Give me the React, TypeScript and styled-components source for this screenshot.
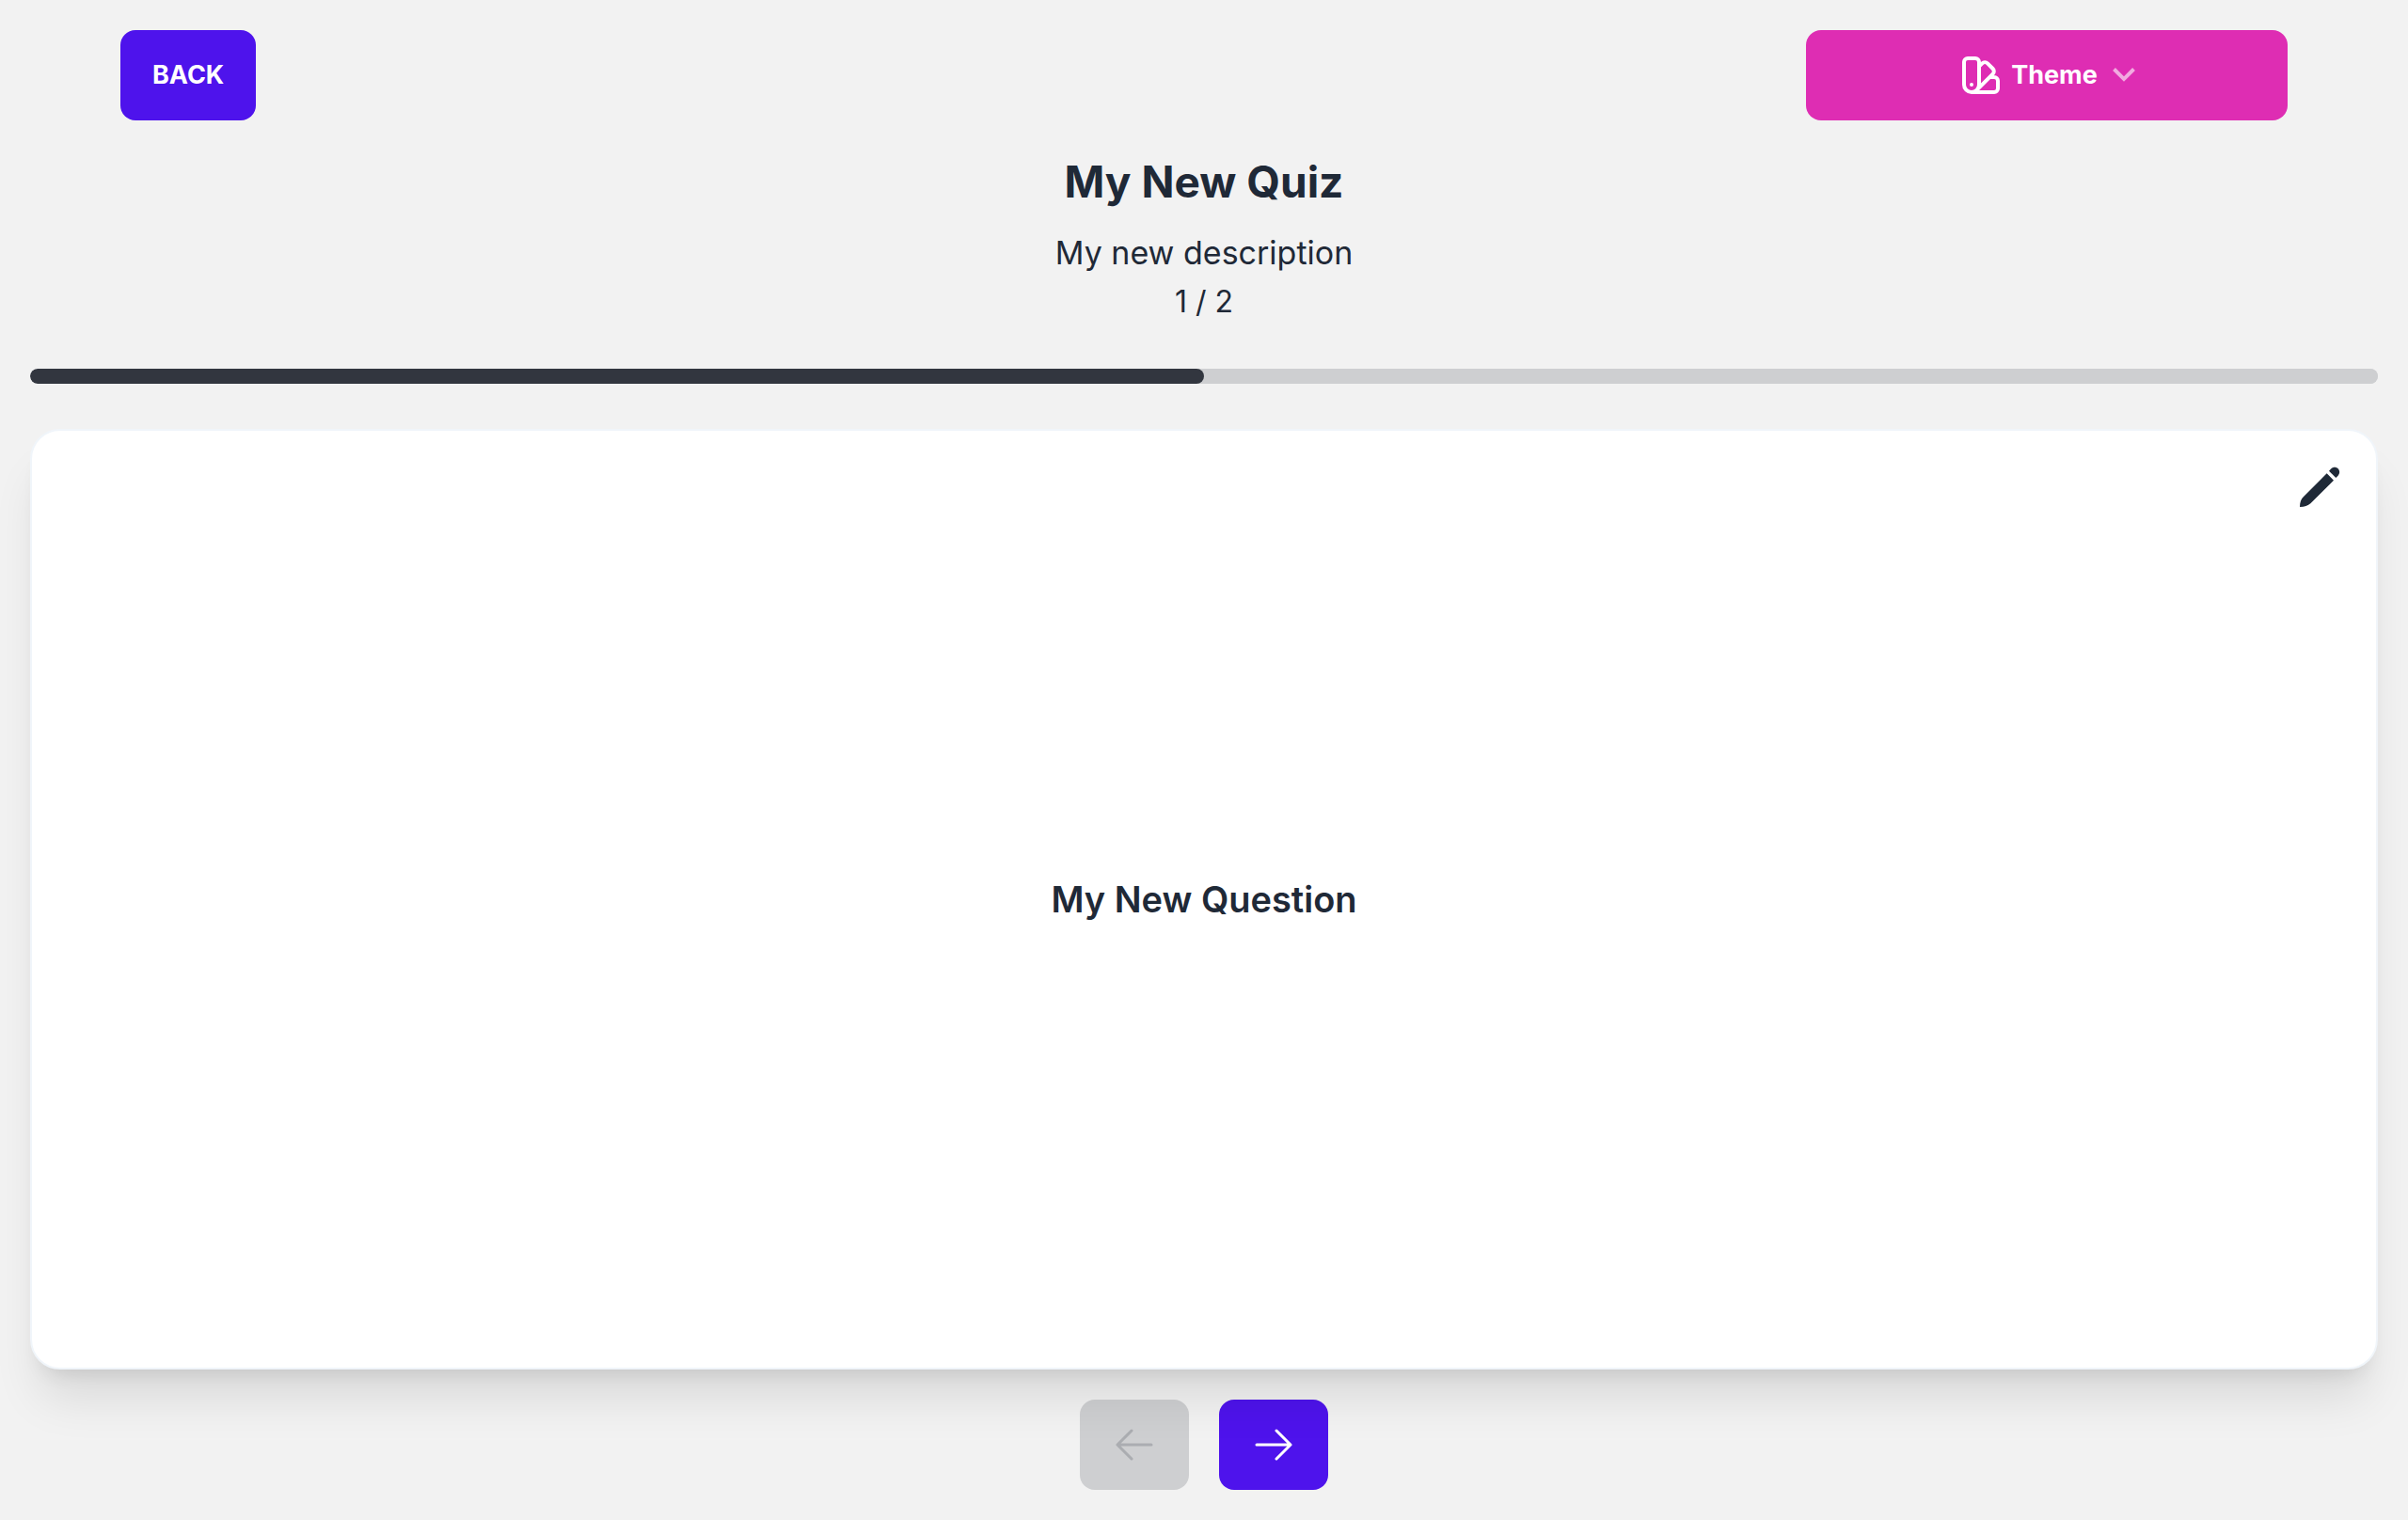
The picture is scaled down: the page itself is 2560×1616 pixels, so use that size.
import React from "react";
import styled, { createGlobalStyle } from "styled-components";

const ink = "#1f2937";
const muted = "#cecfd1";
const primary = "#4e13ec";
const secondary = "#de2db3";

const GlobalStyle = createGlobalStyle`
  *, *::before, *::after { box-sizing: border-box; }
  body {
    margin: 0;
    background: #f2f2f2;
    color: ${ink};
    font-family: Inter, "Liberation Sans", sans-serif;
    font-size: 32px;
    line-height: 48px;
  }
`;

const Page = styled.div`
  display: flex;
  flex-direction: column;
  min-height: 100vh;
  padding: 32px;
`;

const TopBar = styled.header`
  display: flex;
  justify-content: space-between;
  padding: 0 96px;
`;

const Button = styled.button<{ $color?: string; $wide?: boolean }>`
  display: flex;
  align-items: center;
  justify-content: center;
  height: 96px;
  width: ${(p) => (p.$wide ? "512px" : "auto")};
  padding: 0 32px;
  border: 2px solid transparent;
  border-radius: 16px;
  background: ${(p) => p.$color ?? primary};
  background-origin: border-box;
  color: #fff;
  font-family: inherit;
  font-size: 27px;
  font-weight: 700;
  line-height: 28px;
  cursor: pointer;

  &:disabled {
    background: ${muted};
    color: #abadb1;
    cursor: default;
  }
`;

const ThemeLabel = styled.span`
  margin: 0 16px 0 8px;
`;

const Intro = styled.section`
  display: flex;
  flex-direction: column;
  align-items: center;
  padding: 33px 0 47px;
  text-align: center;
`;

const Title = styled.h1`
  margin: 0 0 16px;
  font-size: 46px;
  line-height: 64px;
  font-weight: 700;
`;

const Description = styled.p`
  margin: 0;
  font-size: 34px;
  line-height: 56px;
`;

const Counter = styled.p`
  margin: 0;
`;

const Progress = styled.progress`
  display: block;
  appearance: none;
  width: 100%;
  height: 16px;
  border: 0;
  border-radius: 16px;
  overflow: hidden;
  background: ${muted};

  &::-webkit-progress-bar {
    border-radius: 16px;
    background: ${muted};
  }
  &::-webkit-progress-value {
    border-radius: 16px;
    background: #32363f;
  }
`;

const Card = styled.main`
  position: relative;
  display: grid;
  flex: 1;
  margin: 48px 0 32px;
  padding: 32px;
  border: 2px solid #f0f5fa;
  border-radius: 32px;
  background: #fff;
  box-shadow: 0 40px 50px -10px rgba(0, 0, 0, 0.1),
    0 16px 20px -12px rgba(0, 0, 0, 0.1);
`;

const Question = styled.h2`
  grid-area: 1 / 1;
  place-self: center;
  margin: 0;
  font-size: 38px;
  line-height: 56px;
  font-weight: 600;
`;

const EditButton = styled.button`
  grid-area: 1 / 1;
  place-self: start end;
  display: flex;
  padding: 4px;
  border: 0;
  background: none;
  color: inherit;
  cursor: pointer;
`;

const Pager = styled.nav`
  display: flex;
  justify-content: center;
  gap: 32px;
`;

const SwatchIcon = () => (
  <svg width="48" height="48" viewBox="0 0 24 24" fill="none" stroke="currentColor" strokeWidth="2" strokeLinecap="round" strokeLinejoin="round" aria-hidden="true">
    <path d="M7 21a4 4 0 01-4-4V5a2 2 0 012-2h4a2 2 0 012 2v12a4 4 0 01-4 4zm0 0h12a2 2 0 002-2v-4a2 2 0 00-2-2h-2.343M11 7.343l1.657-1.657a2 2 0 012.828 0l2.829 2.829a2 2 0 010 2.828l-8.486 8.485M7 17h.01" />
  </svg>
);

const ChevronIcon = () => (
  <svg width="24" height="24" viewBox="0 0 2048 2048" fill="currentColor" opacity="0.6" aria-hidden="true">
    <path d="M1799 349l242 241-1017 1017L7 590l242-241 775 775 775-775z" />
  </svg>
);

const PencilIcon = () => (
  <svg width="48" height="48" viewBox="0 0 144 144" fill="currentColor" aria-hidden="true">
    <path d="M102 20L109 13C115 7 125 7 131 13C137 19 137 29 131 35L124 42Z" />
    <path d="M95 28L117 50L43 124C35 131 24 135 9 135C9 120 13 109 21 102Z" />
  </svg>
);

const ArrowIcon = ({ d }: { d: string }) => (
  <svg width="48" height="48" viewBox="0 0 24 24" fill="none" stroke="currentColor" strokeWidth="1.5" strokeLinecap="round" strokeLinejoin="round" aria-hidden="true">
    <path d={d} />
  </svg>
);

export default function App() {
  return (
    <>
      <GlobalStyle />
      <Page>
        <TopBar>
          <Button type="button">BACK</Button>
          <Button type="button" $color={secondary} $wide aria-haspopup="listbox">
            <SwatchIcon />
            <ThemeLabel>Theme</ThemeLabel>
            <ChevronIcon />
          </Button>
        </TopBar>
        <Intro>
          <Title>My New Quiz</Title>
          <Description>My new description</Description>
          <Counter>1 / 2</Counter>
        </Intro>
        <Progress value={1} max={2} aria-label="Quiz progress" />
        <Card>
          <Question>My New Question</Question>
          <EditButton type="button" aria-label="Edit question">
            <PencilIcon />
          </EditButton>
        </Card>
        <Pager aria-label="Questions">
          <Button type="button" disabled aria-label="Previous question">
            <ArrowIcon d="M10.5 19.5 3 12m0 0 7.5-7.5M3 12h18" />
          </Button>
          <Button type="button" aria-label="Next question">
            <ArrowIcon d="M13.5 4.5 21 12m0 0-7.5 7.5M21 12H3" />
          </Button>
        </Pager>
      </Page>
    </>
  );
}
